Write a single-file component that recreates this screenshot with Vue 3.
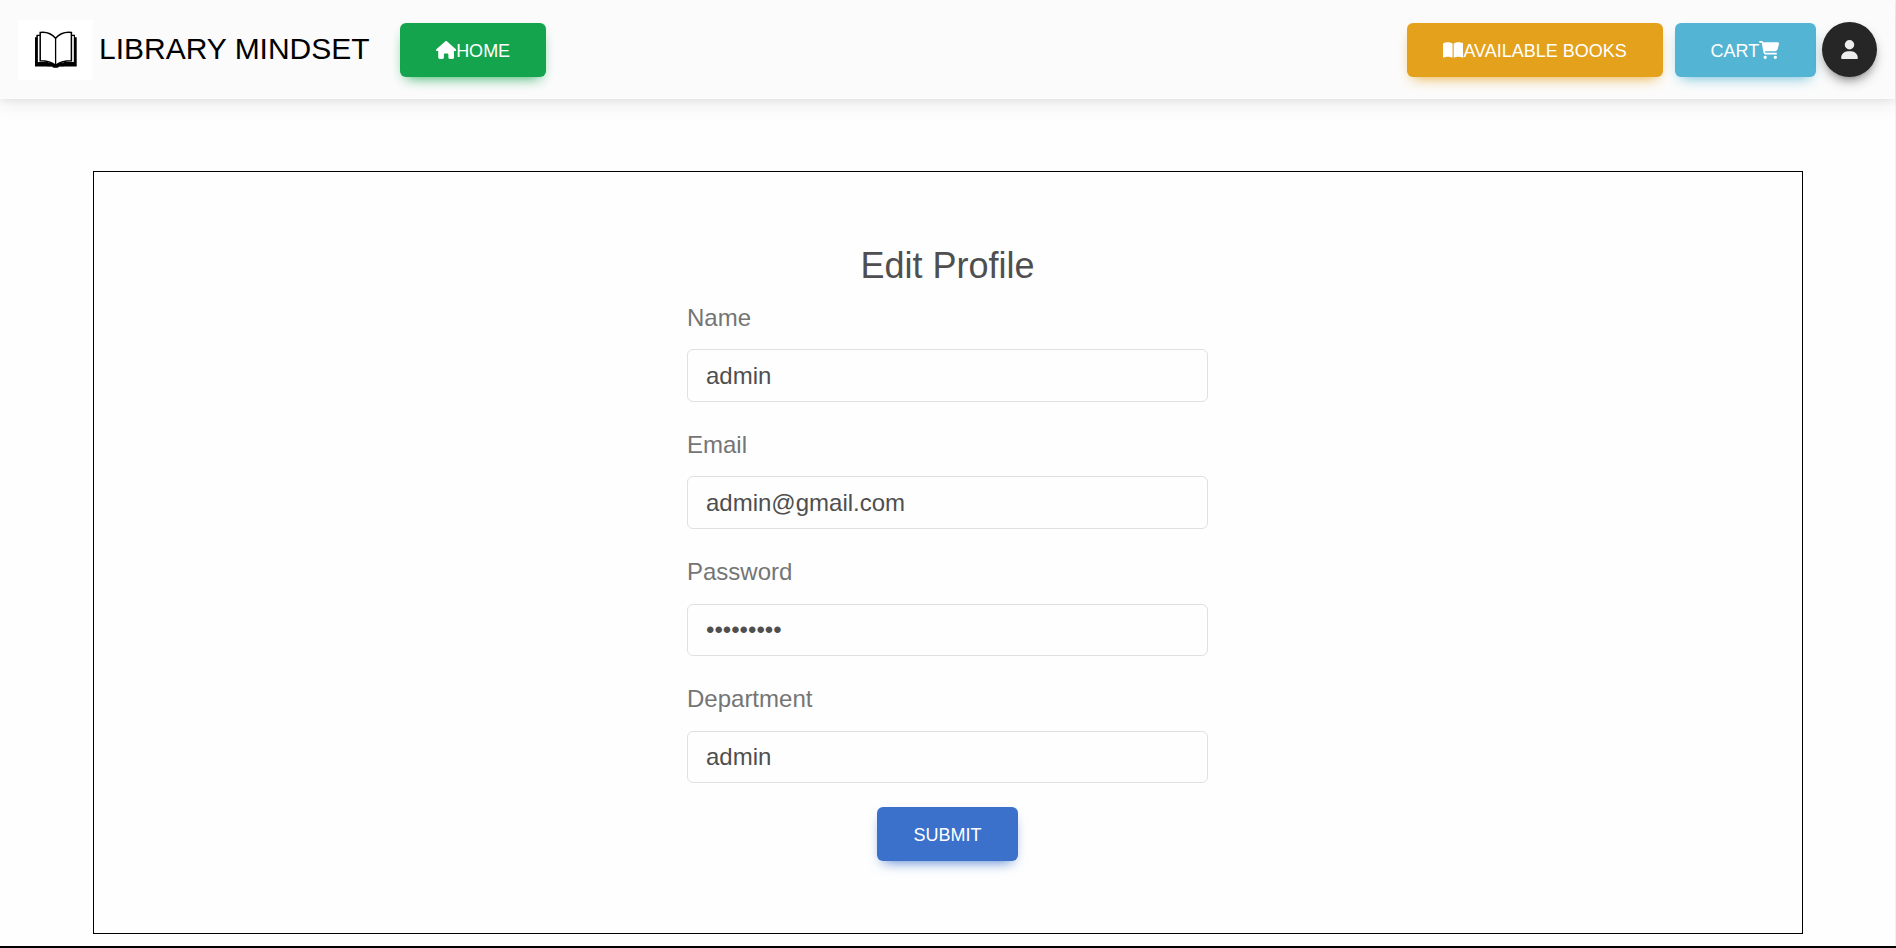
<script setup>
import { ref } from 'vue'

const fields = ref([
  { id: 'name', label: 'Name', type: 'text', value: 'admin' },
  { id: 'email', label: 'Email', type: 'email', value: 'admin@gmail.com' },
  { id: 'password', label: 'Password', type: 'password', value: 'password1' },
  { id: 'department', label: 'Department', type: 'text', value: 'admin' },
])
</script>

<template>
  <div class="page">
    <header class="navbar">
      <a class="brand">
        <svg class="logo" viewBox="0 0 75 60" width="75" height="60">
          <rect width="75" height="60" fill="#fff" />
          <g transform="translate(0 -0.7)">
            <path d="M17 18H18.5V16H20.5V43H34L37.5 45L41 43H55V16H57V18H58.7V47.2H41Q40.5 48.4 39 48.4H36Q34.7 48.4 34.2 47.2H17Z" fill="#000" />
            <path d="M19.4 16.2H22V41.5Q32 40.5 37.5 45.5Q43 40.5 53.5 41.5V16.2H56.2V43.2H19.4Z" fill="#fff" />
            <path d="M22.5 16H19.2V43.4H30M53 16H56.4V43.4H46" fill="none" stroke="#000" stroke-width="1.2" />
            <path d="M28 43.2Q34 43.5 37.6 46.5Q41.2 43.5 47 43.2L46 47H29Z" fill="#000" />
            <path d="M37.6 19Q31.5 12 22.2 13.2V41.5Q32.5 41.5 37.6 46Q42.7 41.5 53.4 41.5V13.2Q43.7 12 37.6 19Z" fill="#fff" stroke="#000" stroke-width="1.5" />
            <path d="M37.6 19V46" stroke="#000" stroke-width="1.3" />
          </g>
        </svg>
        <span>LIBRARY MINDSET</span>
      </a>
      <button class="btn home">
        <svg class="icon" viewBox="0 0 576 512"><path d="M575.8 255.5c0 18-15 32.1-32 32.1l-32 0 .7 160.2c0 2.7-.2 5.4-.5 8.1l0 16.2c0 22.1-17.9 40-40 40l-16 0c-1.1 0-2.2 0-3.3-.1c-1.4 .1-2.8 .1-4.2 .1L416 512l-24 0c-22.1 0-40-17.9-40-40l0-24 0-64c0-17.7-14.3-32-32-32l-64 0c-17.7 0-32 14.3-32 32l0 64 0 24c0 22.1-17.9 40-40 40l-24 0-31.9 0c-1.5 0-3-.1-4.5-.2c-1.2 .1-2.4 .2-3.6 .2l-16 0c-22.1 0-40-17.9-40-40l0-112c0-.9 0-1.9 .1-2.8l0-69.7-32 0c-18 0-32-14-32-32.1c0-9 3-17 10-24L266.4 8c7-7 15-8 22-8s15 2 21 7L564.8 231.5c8 7 12 15 11 24z" /></svg>
        <span>HOME</span>
      </button>
      <nav class="actions">
        <button class="btn books">
          <svg class="icon" viewBox="0 0 576 512"><path d="M249.6 471.5c10.8 3.8 22.4-4.1 22.4-15.5l0-377.4c0-4.2-1.6-8.4-5-11C247.4 52 202.4 32 144 32C93.5 32 46.3 45.3 18.1 56.1C6.8 60.5 0 71.7 0 83.8L0 454.1c0 11.9 12.8 20.2 24.1 16.5C55.6 460.1 105.5 448 144 448c33.9 0 79 14 105.6 23.5zm76.8 0C353 462 398.1 448 432 448c38.5 0 88.4 12.1 119.9 22.6c11.3 3.8 24.1-4.6 24.1-16.5l0-370.3c0-12.1-6.8-23.3-18.1-27.6C529.7 45.3 482.5 32 432 32c-58.4 0-103.4 20-123 35.6c-3.3 2.6-5 6.8-5 11L304 456c0 11.4 11.7 19.3 22.4 15.5z" /></svg>
          <span>AVAILABLE BOOKS</span>
        </button>
        <button class="btn cart">
          <span>CART</span>
          <svg class="icon" viewBox="0 0 576 512"><path d="M0 24C0 10.7 10.7 0 24 0L69.5 0c22 0 41.5 12.8 50.6 32l411 0c26.3 0 45.5 25 38.6 50.4l-41 152.3c-8.5 31.4-37 53.3-69.5 53.3l-288.5 0 5.4 28.5c2.2 11.3 12.1 19.5 23.6 19.5L488 336c13.3 0 24 10.7 24 24s-10.7 24-24 24l-288.3 0c-34.6 0-64.3-24.6-70.7-58.5L77.4 54.5c-.7-3.8-4-6.5-7.9-6.5L24 48C10.7 48 0 37.3 0 24zM128 464a48 48 0 1 1 96 0 48 48 0 1 1 -96 0zm336-48a48 48 0 1 1 0 96 48 48 0 1 1 0-96z" /></svg>
        </button>
        <button class="avatar" aria-label="Account">
          <svg viewBox="0 0 448 512" width="17" height="19"><path d="M224 256A128 128 0 1 0 224 0a128 128 0 1 0 0 256zm-45.7 48C79.8 304 0 383.8 0 482.3C0 498.7 13.3 512 29.7 512l388.6 0c16.4 0 29.7-13.3 29.7-29.7C448 383.8 368.2 304 269.7 304l-91.4 0z" /></svg>
        </button>
      </nav>
    </header>

    <main class="card">
      <h3>Edit Profile</h3>
      <form @submit.prevent>
        <div v-for="f in fields" :key="f.id" class="field">
          <label :for="f.id">{{ f.label }}</label>
          <input :id="f.id" v-model="f.value" :type="f.type" />
        </div>
        <button class="btn submit" type="submit"><span>SUBMIT</span></button>
      </form>
    </main>
    <footer class="footer"></footer>
  </div>
</template>

<style>
body {
  margin: 0;
  overflow: hidden;
}
</style>

<style scoped>
.page {
  box-sizing: border-box;
  height: 948px;
  display: flex;
  flex-direction: column;
  background: #fefefe;
  font-family: 'Liberation Sans', Arial, sans-serif;
  font-size: 24px;
  color: #4f4f4f;
  box-shadow: inset -1px 0 #f1f1f1;
}
.navbar {
  box-sizing: border-box;
  flex: none;
  height: 99px;
  margin-right: 1px;
  padding: 0 18px;
  display: flex;
  align-items: center;
  background: #fbfbfb;
  box-shadow: 0 6px 18px rgba(0, 0, 0, 0.07), 0 3px 6px rgba(0, 0, 0, 0.05);
}
.brand {
  display: flex;
  align-items: center;
  gap: 6px;
  width: 382px;
  color: #000;
  font-size: 30px;
  line-height: 48px;
  white-space: nowrap;
}
.brand span {
  margin-top: -1px;
}
.logo {
  display: block;
}
.btn {
  box-sizing: border-box;
  height: 54px;
  padding: 0;
  display: flex;
  align-items: center;
  justify-content: center;
  border: 0;
  border-radius: 6px;
  color: #fff;
  font: 500 18px/27px 'Liberation Sans', Arial, sans-serif;
  white-space: nowrap;
}
.btn span {
  padding-top: 2px;
}
.icon {
  width: 20.25px;
  height: 18px;
  fill: #fff;
}
.home {
  width: 146px;
  margin-top: 1px;
  background: #14a44d;
  box-shadow: 0 6px 13.5px -6px #14a44d;
}
.actions {
  margin-left: auto;
  margin-top: 1px;
  display: flex;
  align-items: center;
}
.books {
  width: 256px;
  margin-right: 12px;
  background: #e4a11b;
  box-shadow: 0 6px 13.5px -6px #e4a11b;
}
.cart {
  width: 141px;
  margin-right: 6px;
  background: #54b4d3;
  box-shadow: 0 6px 13.5px -6px #54b4d3;
}
.cart span {
  margin-left: -1px;
}
.avatar {
  width: 55px;
  height: 55px;
  margin-top: -1px;
  padding: 0;
  display: flex;
  align-items: center;
  justify-content: center;
  border: 0;
  border-radius: 50%;
  background: #262626;
  box-shadow: 0 6px 13.5px -6px #262626;
}
.avatar svg {
  fill: #eee;
}
.card {
  box-sizing: border-box;
  flex: none;
  width: 1710px;
  height: 763px;
  margin: 72px 0 0 93px;
  padding: 71.6px 1px 0 0;
  border: 1px solid #000;
}
h3 {
  margin: 0 0 12px;
  text-align: center;
  font-size: 36px;
  font-weight: 400;
  line-height: 43.2px;
}
form {
  width: 521px;
  margin: 0 auto;
}
.field {
  display: flex;
  flex-direction: column;
  gap: 12.2px;
  margin-bottom: 24px;
}
label {
  line-height: 38.4px;
  color: #757575;
}
input {
  box-sizing: border-box;
  width: 100%;
  height: 52.5px;
  padding: 0 18px;
  border: 1px solid #e0e0e0;
  border-radius: 6px;
  outline: 0;
  background: transparent;
  color: #4f4f4f;
  font: inherit;
}
.submit {
  width: 141px;
  margin: 0 auto;
  background: #3b71ca;
  box-shadow: 0 6px 13.5px -6px #3b71ca;
}
.footer {
  height: 2px;
  margin-top: auto;
  background: #000;
}
</style>
